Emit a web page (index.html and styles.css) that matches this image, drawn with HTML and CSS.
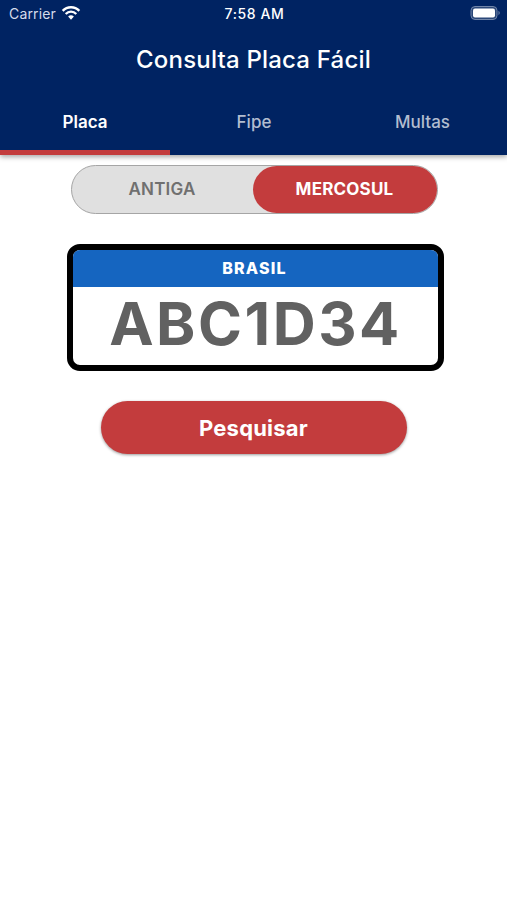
FILE: index.html
```html
<!DOCTYPE html>
<html lang="pt-BR">
<head>
<meta charset="utf-8">
<title>Consulta Placa Fácil</title>
<link rel="stylesheet" href="styles.css">
</head>
<body>
<header class="app-bar">
  <div class="status">
    <div class="carrier"><span>Carrier</span>
      <svg width="20" height="16" viewBox="0 0 20 16" fill="none" stroke="#fff"><path d="M1.700 5.800C6.300 1 13.700 1 18.300 5.800" stroke-width="2.500"/><path d="M4.700 9C7.700 5.900 12.300 5.900 15.300 9" stroke-width="2.300"/><path d="M7.100 11.600Q10 8.900 12.900 11.600L10 14.700Z" fill="#fff" stroke="none"/></svg>
    </div>
    <time class="time">7:58 AM</time>
    <svg class="battery" width="31" height="16" viewBox="0 0 31 16"><rect x="1" y="1.500" width="26" height="13" rx="4" fill="#2b4778" stroke="#7185a9"/><rect x="3" y="3.500" width="22" height="9" rx="2" fill="#fff"/><path d="M28.500 5.800Q31 8 28.500 10.200Z" fill="#7185a9"/></svg>
  </div>
  <h1 class="title">Consulta Placa Fácil</h1>
  <nav class="tabs">
    <a class="tab active">Placa</a>
    <a class="tab">Fipe</a>
    <a class="tab">Multas</a>
  </nav>
</header>
<main class="content">
  <div class="switch">
    <span class="option">ANTIGA</span>
    <span class="option selected">MERCOSUL</span>
  </div>
  <section class="plate">
    <div class="country">BRASIL</div>
    <div class="number">ABC1D34</div>
  </section>
  <button class="search">Pesquisar</button>
</main>
</body>
</html>
```
FILE: styles.css
```css
* { box-sizing: border-box; }
body {
  margin: 0;
  min-height: 900px;
  background: #fff;
  font-family: Inter, "Liberation Sans", sans-serif;
}
.app-bar {
  position: relative;
  height: 155px;
  background: #002362;
  color: #fff;
  box-shadow: 0 2px 5px rgba(0, 0, 0, .35);
}
.status {
  display: grid;
  grid-template-columns: 1fr auto 1fr;
  align-items: center;
  height: 28px;
  padding: 0 7px 1px 9px;
  font-size: 14px;
}
.carrier { display: flex; align-items: center; gap: 5px; color: #d5dceb; letter-spacing: .15px; }
.carrier svg { margin-top: -1px; }
.time { font-weight: 500; font-size: 14px; letter-spacing: .6px; }
.battery { justify-self: end; margin: -1px -1px 0 0; }
.title {
  height: 62px;
  margin: 0;
  text-align: center;
  font-size: 24px;
  font-weight: 500;
  letter-spacing: .2px;
  line-height: 63px;
}
.tabs { display: grid; grid-template-columns: 170px 168px 169px; height: 65px; }
.tab {
  height: 65px;
  border-bottom: 5px solid transparent;
  color: #b2bdd0;
  font-size: 17px;
  font-weight: 500;
  line-height: 64px;
  text-align: center;
}
.tab.active { border-color: #c33c3d; color: #fff; font-weight: 600; }
.content { display: flex; flex-direction: column; align-items: center; padding-top: 10px; }
.switch {
  display: grid;
  grid-template-columns: 1fr 184px;
  width: 367px;
  height: 49px;
  margin-left: 1px;
  border: 1px solid #a5a5a5;
  border-radius: 25px;
  background: #e0e0e0;
}
.option {
  height: 47px;
  color: #707070;
  font-size: 17px;
  font-weight: 600;
  letter-spacing: .2px;
  line-height: 47px;
  text-align: center;
}
.selected { border-radius: 24px; background: #c33c3d; color: #fff; font-weight: 700; }
.plate {
  width: 377px;
  height: 127px;
  margin: 30px 0 0 4px;
  overflow: hidden;
  border: 6px solid #000;
  border-radius: 13px;
  background: #fff;
  text-align: center;
}
.country {
  height: 37px;
  background: #1565c0;
  color: #fff;
  font-size: 16px;
  font-weight: 800;
  letter-spacing: 1.200px;
  line-height: 36px;
  padding-right: 2px;
}
.number {
  color: #616161;
  font-size: 59.500px;
  font-weight: 700;
  letter-spacing: 2.500px;
  line-height: 73px;
}
.search {
  width: 306px;
  height: 53px;
  margin-top: 30px;
  padding: 0;
  border: 0;
  border-radius: 27px;
  background: #c33c3d;
  box-shadow: 0 1px 3px rgba(0, 0, 0, .4);
  color: #fff;
  font: 700 22px Inter, "Liberation Sans", sans-serif;
  letter-spacing: .2px;
}
```
